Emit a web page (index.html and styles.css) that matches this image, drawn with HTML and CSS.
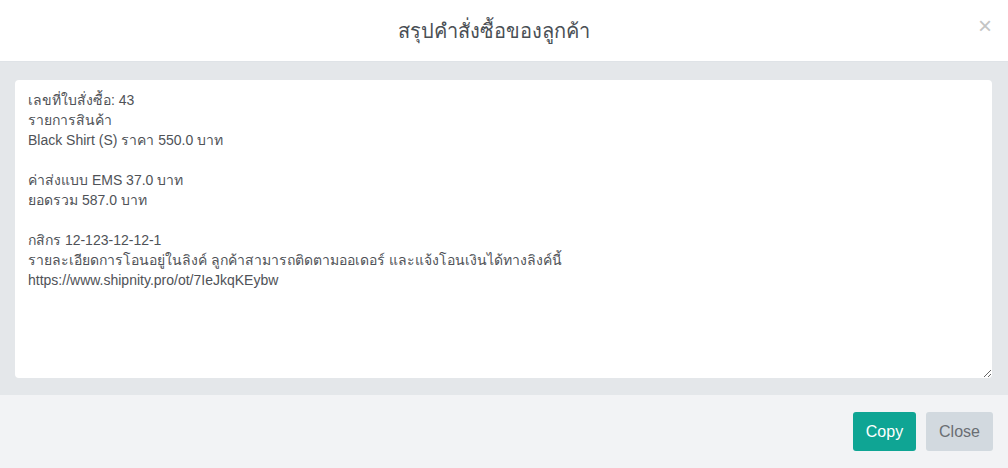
FILE: index.html
```html
<!DOCTYPE html>
<html lang="th">
<head>
<meta charset="utf-8">
<link rel="stylesheet" href="styles.css">
</head>
<body>
<div class="modal">
  <div class="modal-header">
    <h4 class="modal-title">สรุปคำสั่งซื้อของลูกค้า</h4>
    <button class="close-x" type="button">×</button>
  </div>
  <div class="modal-body">
    <textarea class="summary" readonly>เลขที่ใบสั่งซื้อ: 43
รายการสินค้า
Black Shirt (S) ราคา 550.0 บาท

ค่าส่งแบบ EMS 37.0 บาท
ยอดรวม 587.0 บาท

กสิกร 12-123-12-12-1
รายละเอียดการโอนอยู่ในลิงค์ ลูกค้าสามารถติดตามออเดอร์ และแจ้งโอนเงินได้ทางลิงค์นี้
https://www.shipnity.pro/ot/7IeJkqKEybw</textarea>
  </div>
  <div class="modal-footer">
    <button class="btn btn-copy" type="button">Copy</button>
    <button class="btn btn-close" type="button">Close</button>
  </div>
</div>
</body>
</html>
```
FILE: styles.css
```css
html, body {
  margin: 0;
  padding: 0;
  width: 1008px;
  height: 468px;
  overflow: hidden;
  background: #ffffff;
}
.modal {
  display: flex;
  flex-direction: column;
  width: 1008px;
  height: 468px;
  font-family: "Liberation Sans", Arial, "Noto Sans", sans-serif;
}
.modal-header {
  position: relative;
  box-sizing: border-box;
  height: 62px;
  padding-right: 20px;
  border-bottom: 1px solid #dfe3e7;
  display: flex;
  align-items: center;
  justify-content: center;
  background: #fff;
}
.modal-title {
  margin: 0;
  font-family: "Noto Sans", "Open Sans", sans-serif;
  font-weight: 400;
  font-size: 20px;
  color: #4a4f55;
}
.close-x {
  position: absolute;
  right: 16px;
  top: 14px;
  border: 0;
  background: none;
  font-family: "Liberation Sans", Arial, sans-serif;
  font-size: 24px;
  line-height: 24px;
  color: #c4c4c4;
  padding: 0;
}
.modal-body {
  background: #e4e7ea;
  padding: 18px 16px 17px 15px;
  height: 298px;
}
.summary {
  display: block;
  box-sizing: border-box;
  width: 977px;
  height: 298px;
  margin: 0;
  border: 0;
  border-radius: 4px;
  background: #fff;
  padding: 10px 13px;
  font-family: "Liberation Sans", Arial, "Noto Sans", sans-serif;
  font-size: 14px;
  line-height: 20px;
  color: #4f5257;
  resize: vertical;
  outline: none;
}
.modal-footer {
  flex: 1;
  background: #f2f3f5;
  display: flex;
  justify-content: flex-end;
  align-items: flex-start;
  gap: 10px;
  padding: 17px 15px 0 0;
}
.btn {
  height: 39px;
  border: 0;
  border-radius: 3px;
  font-family: "Liberation Sans", Arial, sans-serif;
  font-size: 16px;
  padding: 0 12px;
}
.btn-copy {
  width: 63px;
  background: #0fa594;
  color: #fff;
}
.btn-close {
  width: 67px;
  background: #d2d9df;
  color: #6a6e73;
}
```
